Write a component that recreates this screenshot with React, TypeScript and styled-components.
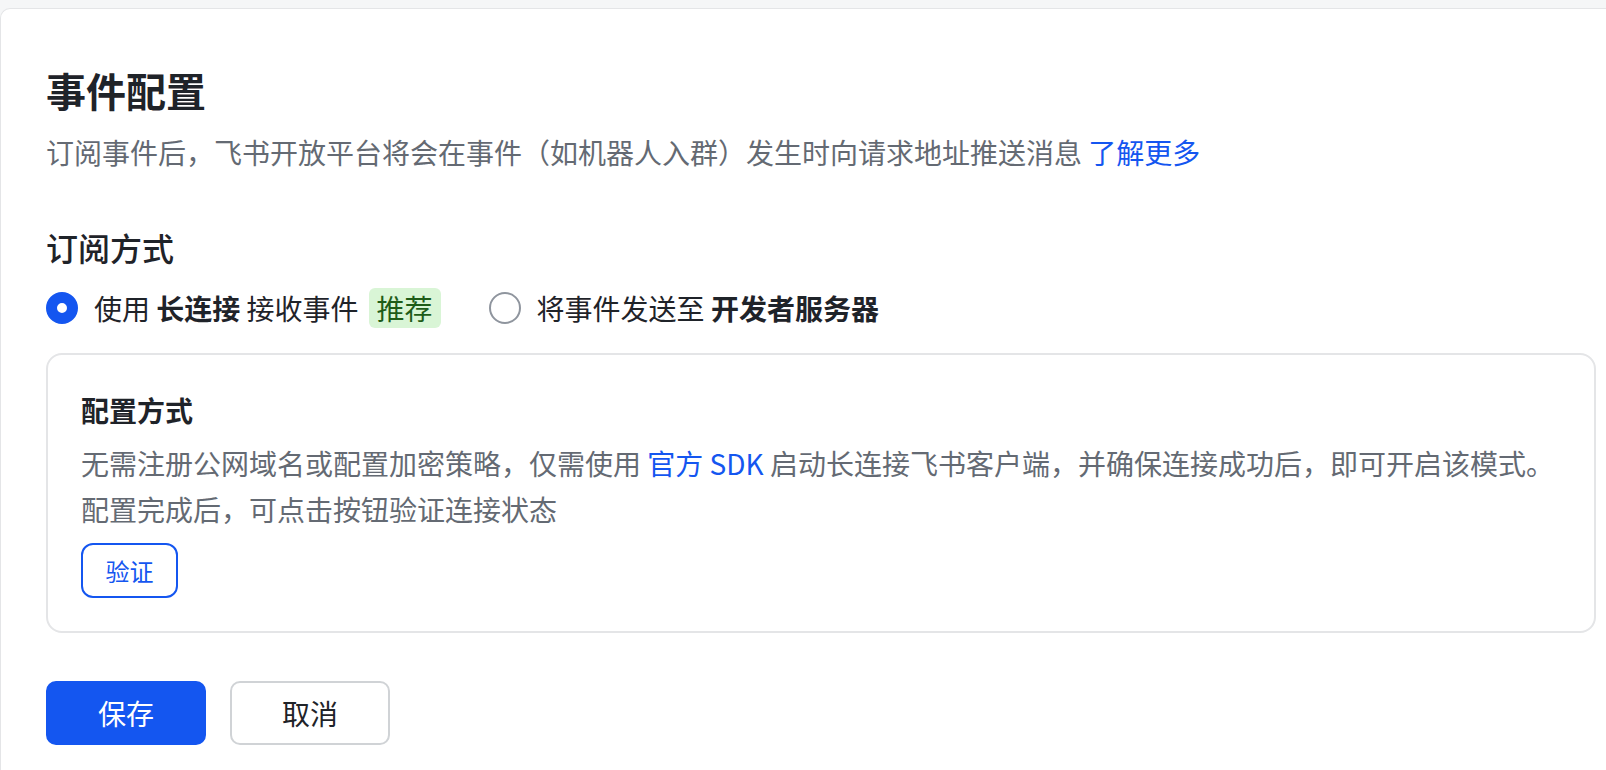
import styled, { createGlobalStyle } from 'styled-components';

const GlobalStyle = createGlobalStyle`
  html, body {
    margin: 0;
    padding: 0;
    background: #f5f6f7;
  }
  body {
    font-family: "Noto Sans CJK SC", "Noto Sans", "Liberation Sans", sans-serif;
    color: #1f2329;
  }
`;

const Page = styled.div`
  padding-top: 8px;
  min-height: 762px;
`;

const Card = styled.div`
  background: #fff;
  border-top: 1px solid #e4e5e7;
  border-left: 1px solid #e4e5e7;
  border-radius: 10px 0 0 0;
  padding: 53px 10px 40px 45px;
  min-height: 700px;
  box-sizing: border-box;
`;

const Title = styled.h1`
  margin: 0;
  font-size: 40px;
  line-height: 56px;
  font-weight: 600;
  color: #1f2329;
`;

const Description = styled.p`
  margin: 14px 0 0;
  font-size: 28px;
  line-height: 40px;
  color: #646a73;
`;

const Link = styled.a`
  color: #1456f0;
  text-decoration: none;
  cursor: pointer;
`;

const SectionTitle = styled.h2`
  margin: 53px 0 0;
  font-size: 32px;
  line-height: 44px;
  font-weight: 500;
  color: #1f2329;
`;

const RadioGroup = styled.div`
  display: flex;
  align-items: center;
  gap: 48px;
  margin-top: 19px;
  height: 40px;
`;

const RadioOption = styled.label`
  display: flex;
  align-items: center;
  font-size: 28px;
  line-height: 40px;
  color: #1f2329;
  cursor: pointer;
  white-space: pre;
`;

const RadioMark = styled.span<{ $checked?: boolean }>`
  box-sizing: border-box;
  width: 32px;
  height: 32px;
  border-radius: 50%;
  margin-right: 16px;
  flex-shrink: 0;
  background: ${({ $checked }) => ($checked ? '#fff' : '#fff')};
  border: ${({ $checked }) => ($checked ? '11px solid #1456f0' : '2px solid #8f959e')};
`;

const Strong = styled.b`
  font-weight: 700;
`;

const Tag = styled.span`
  margin-left: 10px;
  padding: 0 8px;
  height: 40px;
  line-height: 40px;
  border-radius: 6px;
  background: #d9f5d6;
  color: #1e5c18;
  font-size: 28px;
`;

const Panel = styled.div`
  margin-top: 25px;
  border: 2px solid #e4e5e7;
  border-radius: 16px;
  padding: 35px 33px 33px;
`;

const PanelTitle = styled.h3`
  margin: 0;
  font-size: 28px;
  line-height: 40px;
  font-weight: 700;
  color: #1f2329;
`;

const PanelText = styled.p`
  margin: 10px 0 0;
  font-size: 28px;
  line-height: 46px;
  color: #646a73;
`;

const Button = styled.button<{ $variant: 'primary' | 'outline' | 'default' }>`
  box-sizing: border-box;
  font-family: inherit;
  cursor: pointer;
  border-radius: 10px;
  ${({ $variant }) =>
    $variant === 'primary'
      ? `background: #1456f0; border: 2px solid #1456f0; color: #fff;`
      : $variant === 'outline'
        ? `background: #fff; border: 2px solid #1456f0; color: #1456f0;`
        : `background: #fff; border: 2px solid #d0d3d6; color: #1f2329;`}
`;

const VerifyButton = styled(Button)`
  margin-top: 11px;
  width: 97px;
  height: 55px;
  font-size: 24px;
  border-radius: 12px;
`;

const Actions = styled.div`
  display: flex;
  gap: 24px;
  margin-top: 48px;
`;

const ActionButton = styled(Button)`
  width: 160px;
  height: 64px;
  font-size: 28px;
`;

export default function App() {
  return (
    <Page>
      <GlobalStyle />
      <Card>
        <Title>事件配置</Title>
        <Description>
          订阅事件后，飞书开放平台将会在事件（如机器人入群）发生时向请求地址推送消息{' '}
          <Link>了解更多</Link>
        </Description>

        <SectionTitle>订阅方式</SectionTitle>
        <RadioGroup>
          <RadioOption>
            <RadioMark $checked />
            使用 <Strong>长连接</Strong> 接收事件
            <Tag>推荐</Tag>
          </RadioOption>
          <RadioOption>
            <RadioMark />
            将事件发送至 <Strong>开发者服务器</Strong>
          </RadioOption>
        </RadioGroup>

        <Panel>
          <PanelTitle>配置方式</PanelTitle>
          <PanelText>
            无需注册公网域名或配置加密策略，仅需使用 <Link>官方 SDK</Link>{' '}
            启动长连接飞书客户端，并确保连接成功后，即可开启该模式。
            <br />
            配置完成后，可点击按钮验证连接状态
          </PanelText>
          <VerifyButton $variant="outline">验证</VerifyButton>
        </Panel>

        <Actions>
          <ActionButton $variant="primary">保存</ActionButton>
          <ActionButton $variant="default">取消</ActionButton>
        </Actions>
      </Card>
    </Page>
  );
}
